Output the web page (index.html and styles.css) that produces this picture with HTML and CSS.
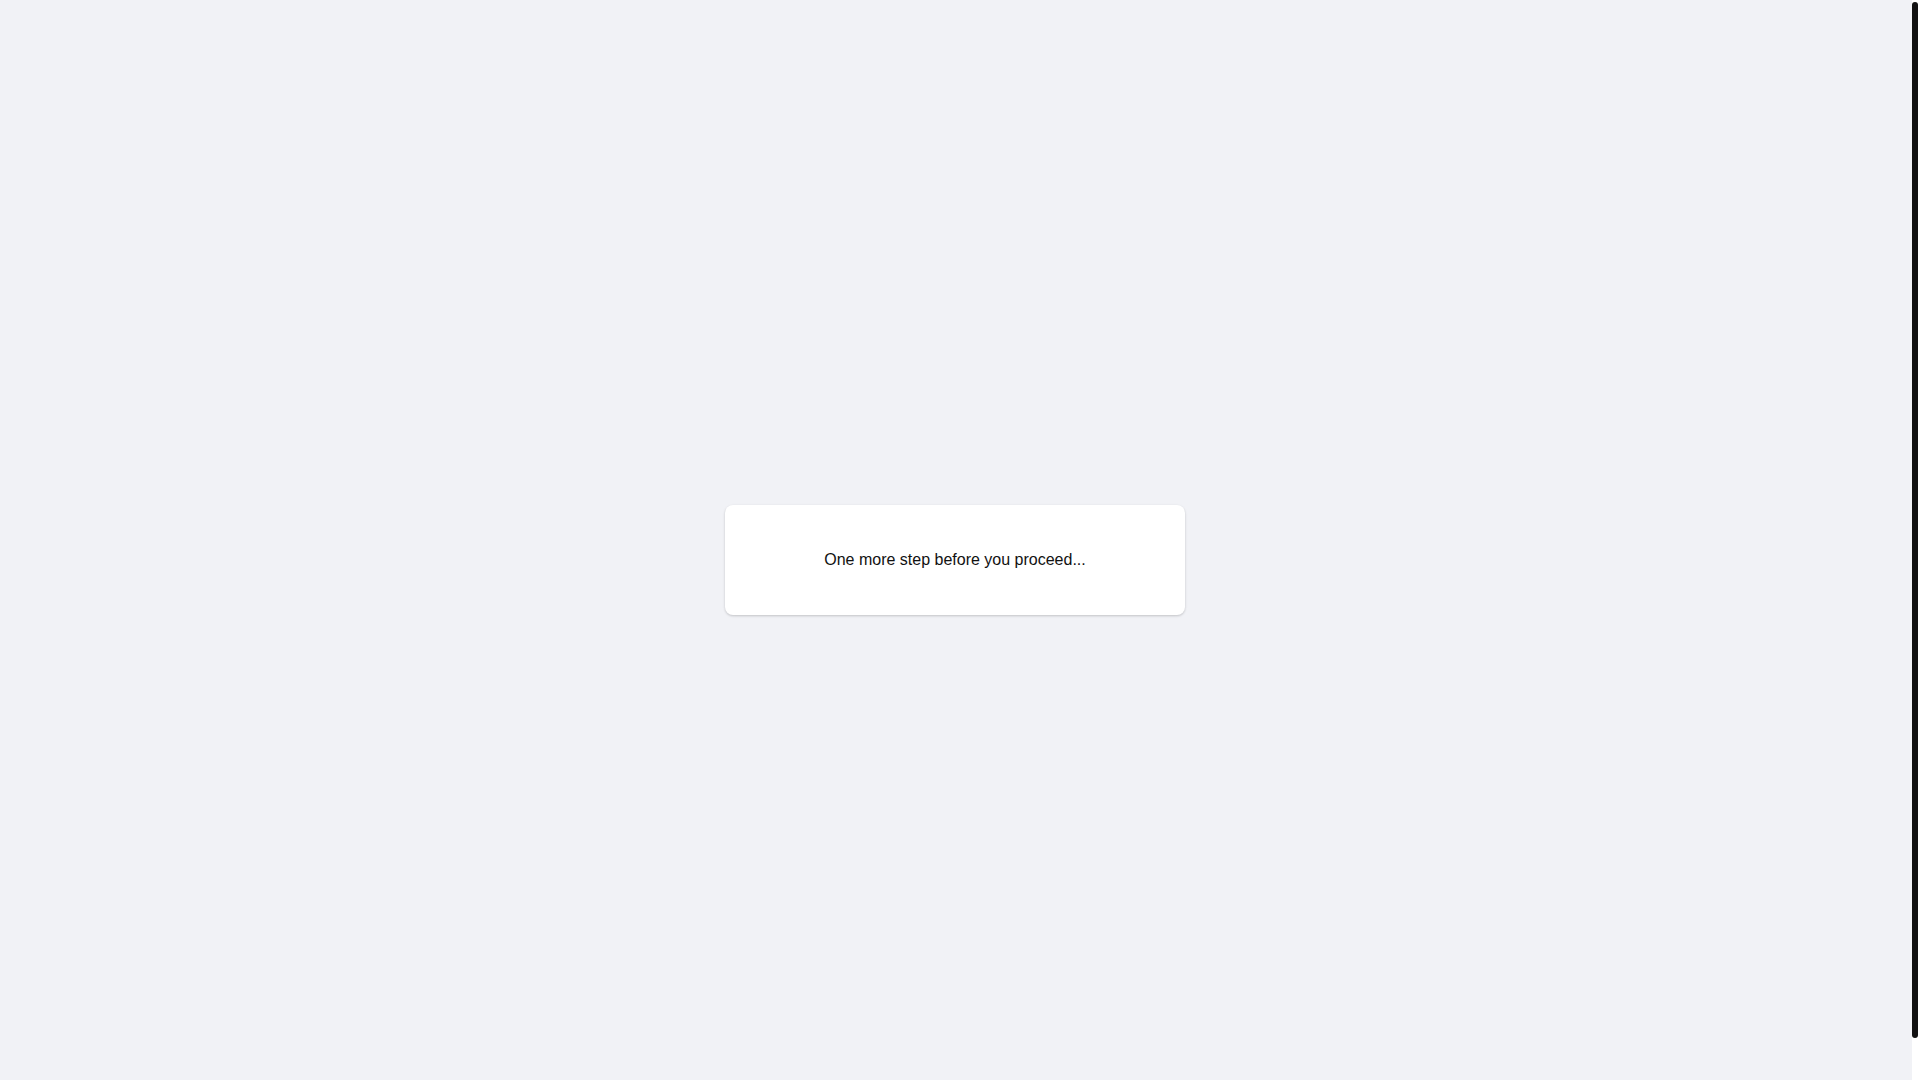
FILE: index.html
```html
<!DOCTYPE html>
<html lang="en">
<head>
<meta charset="utf-8">
<title>One more step</title>
<link rel="stylesheet" href="styles.css">
</head>
<body>
<main class="page">
  <div class="card">
    <p class="message">One more step before you proceed...</p>
  </div>
</main>
<div class="scroll-track" aria-hidden="true"><div class="scroll-thumb"></div></div>
</body>
</html>
```

FILE: styles.css
```css
html, body {
  margin: 0;
  padding: 0;
  height: 100%;
  overflow: hidden;
  background: #f1f2f6;
}
body {
  font-family: "Liberation Sans", Arial, sans-serif;
  color: #111;
}
.page {
  height: 100vh;
  box-sizing: border-box;
  padding: 0 10px 0 0;
  display: flex;
  align-items: center;
  justify-content: center;
  background: #f1f2f6;
}
.card {
  width: 460px;
  height: 110px;
  margin-top: 40px;
  box-sizing: border-box;
  background: #fff;
  border-radius: 8px;
  box-shadow: 0 1px 3px rgba(0, 0, 0, 0.12), 0 1px 2px rgba(0, 0, 0, 0.08);
  display: flex;
  align-items: center;
  justify-content: center;
}
.message {
  margin: 0;
  font-size: 16px;
  line-height: 24px;
}
.scroll-track {
  position: fixed;
  top: 0;
  right: 0;
  bottom: 0;
  width: 8px;
  background: #fff;
}
.scroll-thumb {
  margin-top: 2px;
  width: 6px;
  height: 1036px;
  background: #111;
  border-radius: 3px;
}
```
